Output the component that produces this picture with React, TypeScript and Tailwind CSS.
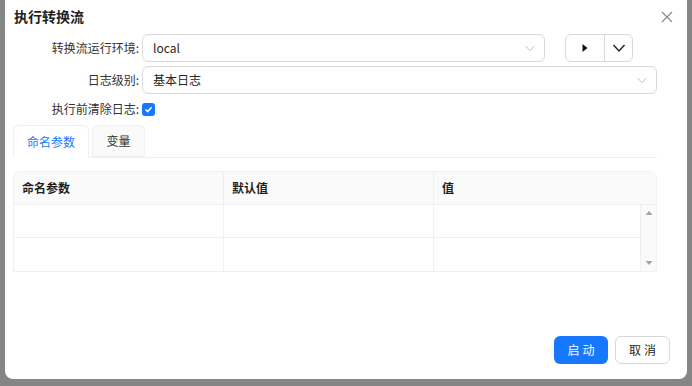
import React from "react";

const font = { fontFamily: '"Noto Sans CJK SC", "Noto Sans", sans-serif' };

function Chevron({ className = "" }: { className?: string }) {
  return (
    <svg width="12" height="12" viewBox="0 0 12 12" className={className}>
      <path d="M1.5 4 L6 8.5 L10.5 4" fill="none" stroke="currentColor" strokeWidth="1" />
    </svg>
  );
}

export default function App() {
  return (
    <div className="w-[692px] h-[386px] bg-[#858585] overflow-hidden" style={font}>
      <div className="ml-[5px] w-[682px] h-[379px] bg-white rounded-b-[8px] flex flex-col text-[12px] text-[#262626]">
        {/* Title */}
        <div className="h-[34px] flex items-center justify-between pl-[9px] pr-[12px]">
          <div className="text-[14px] font-bold text-[#1f1f1f] -mt-[1px]">执行转换流</div>
          <svg width="14" height="14" viewBox="0 0 14 14" className="text-[#8c8c8c] mr-[1px]">
            <path d="M2 2 L12 12 M12 2 L2 12" stroke="currentColor" strokeWidth="1.3" />
          </svg>
        </div>
        {/* Row 1 */}
        <div className="flex items-center h-[28px]">
          <div className="w-[134px] text-right text-[#333]">转换流运行环境:</div>
          <div className="ml-[3px] w-[403px] h-[28px] border border-[#d9d9d9] rounded-[6px] flex items-center justify-between pl-[10px] pr-[8px]">
            <span className="text-[12px] text-[#262626]">local</span>
            <Chevron className="text-[#bfbfbf]" />
          </div>
          <div className="ml-[20px] flex h-[28px] border border-[#d9d9d9] rounded-[6px]">
            <div className="w-[39px] flex items-center justify-center border-r border-[#d9d9d9]">
              <svg width="8" height="10" viewBox="0 0 8 10">
                <path d="M1.5 1 L6.5 5 L1.5 9 Z" fill="#111" />
              </svg>
            </div>
            <div className="w-[27px] flex items-center justify-center">
              <svg width="14" height="12" viewBox="0 0 14 12">
                <path d="M1.5 3 L7 9 L12.5 3" fill="none" stroke="#222" strokeWidth="1.4" />
              </svg>
            </div>
          </div>
        </div>
        {/* Row 2 */}
        <div className="flex items-center h-[28px] mt-[4px]">
          <div className="w-[134px] text-right text-[#333]">日志级别:</div>
          <div className="ml-[3px] w-[515px] h-[28px] border border-[#d9d9d9] rounded-[6px] flex items-center justify-between pl-[10px] pr-[8px]">
            <span className="text-[12px] text-[#262626]">基本日志</span>
            <Chevron className="text-[#bfbfbf]" />
          </div>
        </div>
        {/* Row 3 */}
        <div className="flex items-center h-[14px] mt-[8px]">
          <div className="w-[134px] text-right text-[#333]">执行前清除日志:</div>
          <div className="ml-[3px] w-[13px] h-[13px] rounded-[3px] bg-[#1677ff] flex items-center justify-center">
            <svg width="9" height="9" viewBox="0 0 9 9">
              <path d="M1.5 4.5 L3.7 6.6 L7.6 2.2" fill="none" stroke="white" strokeWidth="1.6" />
            </svg>
          </div>
        </div>
        {/* Tabs */}
        <div className="ml-[8px] w-[644px] mt-[9px] flex items-end h-[33px] border-b border-[#f0f0f0]">
          <div className="w-[76px] h-[33px] border border-[#f0f0f0] border-b-white rounded-t-[6px] bg-white flex items-center justify-center text-[#1677ff] -mb-[1px]">
            命名参数
          </div>
          <div className="ml-[3px] w-[53px] h-[32px] border border-[#f0f0f0] rounded-t-[6px] bg-[#fafafa] flex items-center justify-center text-[#333]">
            变量
          </div>
        </div>
        {/* Table */}
        <div className="ml-[8px] w-[644px] mt-[13px] border border-[#f0f0f0] rounded-t-[8px] overflow-hidden">
          <div className="flex h-[33px] bg-[#fafafa] border-b border-[#f0f0f0] font-semibold text-[#1f1f1f]">
            <div className="w-[210px] border-r border-[#f0f0f0] flex items-center pl-[8px]">命名参数</div>
            <div className="w-[210px] border-r border-[#f0f0f0] flex items-center pl-[8px]">默认值</div>
            <div className="flex-1 flex items-center pl-[8px]">值</div>
          </div>
          <div className="flex">
            <div className="flex-1">
              <div className="flex h-[33px] border-b border-[#f0f0f0]">
                <div className="w-[210px] border-r border-[#f0f0f0]" />
                <div className="w-[210px] border-r border-[#f0f0f0]" />
                <div className="flex-1 border-r border-[#f0f0f0]" />
              </div>
              <div className="flex h-[33px]">
                <div className="w-[210px] border-r border-[#f0f0f0]" />
                <div className="w-[210px] border-r border-[#f0f0f0]" />
                <div className="flex-1 border-r border-[#f0f0f0]" />
              </div>
            </div>
            <div className="w-[15px] bg-[#fafafa] flex flex-col items-center justify-between py-[5px]">
              <svg width="8" height="6" viewBox="0 0 8 6"><path d="M0.5 5 L4 1 L7.5 5 Z" fill="#a3a3a3" /></svg>
              <svg width="8" height="6" viewBox="0 0 8 6"><path d="M0.5 1 L4 5 L7.5 1 Z" fill="#a3a3a3" /></svg>
            </div>
          </div>
        </div>
        {/* Footer */}
        <div className="mt-auto mb-[15px] flex justify-end pr-[17px] gap-[7px]">
          <div className="w-[54px] h-[28px] rounded-[6px] bg-[#1677ff] text-white flex items-center justify-center tracking-[3px] pl-[3px]">
            启动
          </div>
          <div className="w-[55px] h-[28px] rounded-[6px] border border-[#d9d9d9] text-[#262626] flex items-center justify-center tracking-[3px] pl-[3px]">
            取消
          </div>
        </div>
      </div>
    </div>
  );
}
